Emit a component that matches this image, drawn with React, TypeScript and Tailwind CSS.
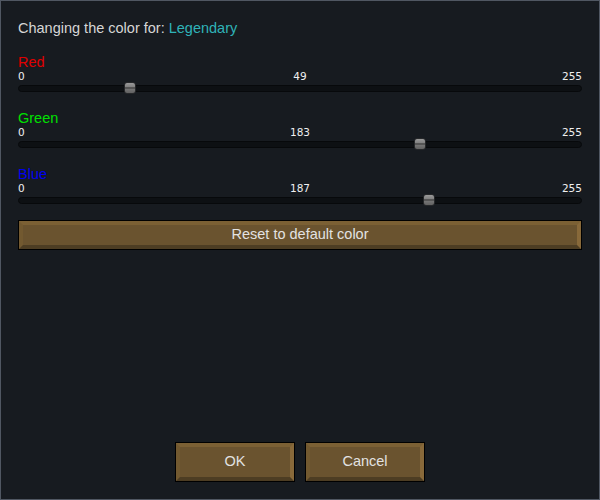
const sliders = [
  { label: 'Red', color: 'text-[#e00000]', value: 49 },
  { label: 'Green', color: 'text-[#00e000]', value: 183 },
  { label: 'Blue', color: 'text-[#0000f0]', value: 187 },
];

const MAX = 255;

function BevelButton({ children, className }: { children: React.ReactNode; className: string }) {
  return (
    <button className={`border border-black bg-black p-0 ${className}`}>
      <span className="flex h-full w-full items-center justify-center border-4 border-t-[#7b6034] border-l-[#725930] border-r-[#88693a] border-b-[#4d3d23] bg-[#6a532f] text-[14.5px] text-[#e2e2e2]">
        {children}
      </span>
    </button>
  );
}

function Slider({ label, color, value }: { label: string; color: string; value: number }) {
  // thumb travel = track width minus thumb width
  const pct = value / MAX;
  return (
    <div className="flex flex-col">
      <div className={`h-[16px] text-[14.5px] leading-[16px] ${color}`}>{label}</div>
      <div className="flex h-[12px] items-center justify-between text-[10.5px] leading-[12px] text-[#f0f0f0] font-['DejaVu_Sans',sans-serif]">
        <span className="w-[40px]">0</span>
        <span>{value}</span>
        <span className="w-[40px] text-right">{MAX}</span>
      </div>
      <div className="relative flex h-[13px] items-center">
        <div className="h-[7px] w-full rounded-full border border-[#07090b] bg-[#0d1013]" />
        <div
          className="absolute top-[0px] h-[12px] w-[12px] rounded-[3px] border border-[#26282a] bg-gradient-to-b from-[#9a9a9a] via-[#7a7a7a] to-[#626262]"
          style={{ left: `calc(${pct} * (100% - 12px))` }}
        >
          <div className="mt-[4px] h-[2px] w-full bg-[#555555]" />
        </div>
      </div>
    </div>
  );
}

export default function App() {
  return (
    <div className="flex h-[500px] w-[600px] flex-col border border-[#505762] bg-[#171b20] px-[17px] pt-[17px] pb-[17px] font-['Liberation_Sans',Arial,sans-serif]">
      <div className="h-[20px] text-[14.5px] leading-[20px] text-[#d6d6d6]">
        Changing the color for: <span className="text-[#2fb3b8]">Legendary</span>
      </div>

      <div className="mt-[16px] flex flex-col gap-[15px]">
        {sliders.map((s) => (
          <Slider key={s.label} {...s} />
        ))}
      </div>

      <BevelButton className="mt-[13px] h-[30px] w-full">Reset to default color</BevelButton>

      <div className="flex-1" />

      <div className="flex justify-center gap-[10px]">
        <BevelButton className="h-[40px] w-[120px]">OK</BevelButton>
        <BevelButton className="h-[40px] w-[120px]">Cancel</BevelButton>
      </div>
    </div>
  );
}
